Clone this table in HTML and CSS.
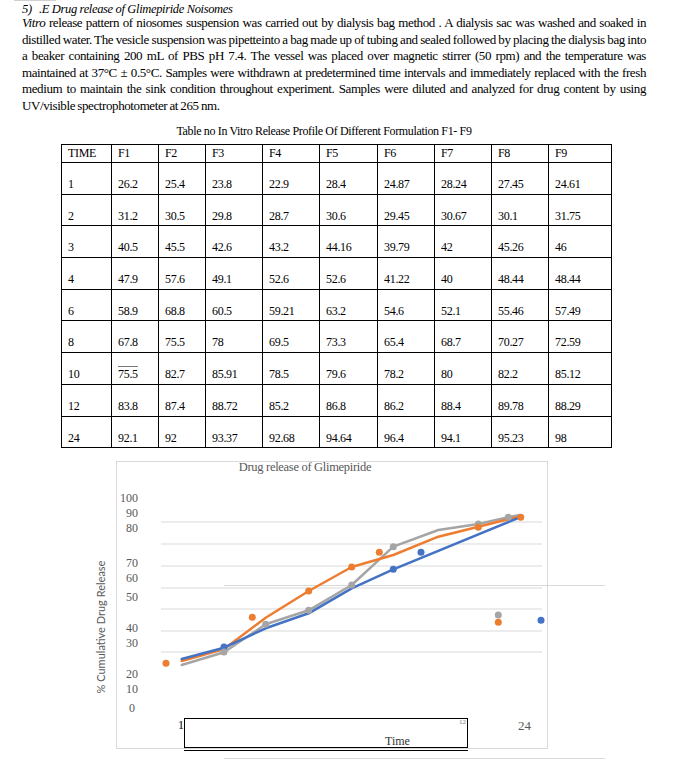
FILE: index.html
```html
<!DOCTYPE html>
<html>
<head>
<meta charset="utf-8">
<link rel="stylesheet" href="styles.css">
</head>
<body>
<div class="topmark"></div>
<div class="doc">
  <p class="heading"><span class="num">5)</span>.E Drug release of Glimepiride Noisomes</p>
  <p class="body"><i>Vitro</i> release pattern of niosomes suspension was carried out by dialysis bag method . A dialysis sac was washed and soaked in distilled water. The vesicle suspension was pipetteinto a bag made up of tubing and sealed followed by placing the dialysis bag into a beaker containing 200 mL of PBS pH 7.4. The vessel was placed over magnetic stirrer (50 rpm) and the temperature was maintained at 37°C ± 0.5°C. Samples were withdrawn at predetermined time intervals and immediately replaced with the fresh medium to maintain the sink condition throughout experiment. Samples were diluted and analyzed for drug content by using UV/visible spectrophotometer at 265 nm.</p>
  <p class="caption">Table no In Vitro Release Profile Of Different Formulation F1- F9</p>
  <table class="data">
    <colgroup>
      <col class="c0"><col class="c1"><col class="c2"><col class="c3"><col class="c4"><col class="c5"><col class="c6"><col class="c7"><col class="c8"><col class="c9">
    </colgroup>
    <tr class="head"><td>TIME</td><td>F1</td><td>F2</td><td>F3</td><td>F4</td><td>F5</td><td>F6</td><td>F7</td><td>F8</td><td>F9</td></tr>
    <tr><td>1</td><td>26.2</td><td>25.4</td><td>23.8</td><td>22.9</td><td>28.4</td><td>24.87</td><td>28.24</td><td>27.45</td><td>24.61</td></tr>
    <tr><td>2</td><td>31.2</td><td>30.5</td><td>29.8</td><td>28.7</td><td>30.6</td><td>29.45</td><td>30.67</td><td>30.1</td><td>31.75</td></tr>
    <tr><td>3</td><td>40.5</td><td>45.5</td><td>42.6</td><td>43.2</td><td>44.16</td><td>39.79</td><td>42</td><td>45.26</td><td>46</td></tr>
    <tr><td>4</td><td>47.9</td><td>57.6</td><td>49.1</td><td>52.6</td><td>52.6</td><td>41.22</td><td>40</td><td>48.44</td><td>48.44</td></tr>
    <tr><td>6</td><td>58.9</td><td>68.8</td><td>60.5</td><td>59.21</td><td>63.2</td><td>54.6</td><td>52.1</td><td>55.46</td><td>57.49</td></tr>
    <tr><td>8</td><td>67.8</td><td>75.5</td><td>78</td><td>69.5</td><td>73.3</td><td>65.4</td><td>68.7</td><td>70.27</td><td>72.59</td></tr>
    <tr><td>10</td><td><span class="mark">75.5</span></td><td>82.7</td><td>85.91</td><td>78.5</td><td>79.6</td><td>78.2</td><td>80</td><td>82.2</td><td>85.12</td></tr>
    <tr><td>12</td><td>83.8</td><td>87.4</td><td>88.72</td><td>85.2</td><td>86.8</td><td>86.2</td><td>88.4</td><td>89.78</td><td>88.29</td></tr>
    <tr><td>24</td><td>92.1</td><td>92</td><td>93.37</td><td>92.68</td><td>94.64</td><td>96.4</td><td>94.1</td><td>95.23</td><td>98</td></tr>
  </table>
</div>
<svg class="chart" width="675" height="306" viewBox="0 456 675 306" xmlns="http://www.w3.org/2000/svg">
  <g class="grid">
    <rect x="116.5" y="461.5" width="431" height="287" fill="#fff" stroke="#d9d9d9"/>
    <line x1="161" y1="522" x2="542" y2="522"/>
    <line x1="161" y1="544" x2="542" y2="544"/>
    <line x1="161" y1="566" x2="542" y2="566"/>
    <line x1="161" y1="588" x2="542" y2="588"/>
    <line x1="224" y1="585.5" x2="605" y2="585.5"/>
    <line x1="161" y1="609" x2="542" y2="609"/>
    <line x1="161" y1="631" x2="542" y2="631"/>
    <line x1="161" y1="652" x2="542" y2="652"/>
    <line x1="224" y1="758.5" x2="605" y2="758.5"/>
  </g>
  <text class="title" x="305" y="471" text-anchor="middle">Drug release of Glimepiride</text>
  <g class="ylab" text-anchor="end">
    <text x="138" y="502">100</text>
    <text x="138" y="517">90</text>
    <text x="138" y="532">80</text>
    <text x="138" y="567">70</text>
    <text x="138" y="582">60</text>
    <text x="138" y="601">50</text>
    <text x="138" y="632">40</text>
    <text x="138" y="647">30</text>
    <text x="138" y="678">20</text>
    <text x="138" y="693">10</text>
    <text x="135" y="712">0</text>
  </g>
  <text class="ytitle" transform="translate(105,627) rotate(-90)" text-anchor="middle">% Cumulative Drug Release</text>
  <polyline class="ln gray" points="181.7,665 224,652.3 265.7,624.3 308.7,610.3 351.7,585 393.3,546.7 438.3,530 478.3,524 508.3,517.3 520,515"/>
  <polyline class="ln orange" points="181.7,661 224,649 265.7,617.7 308.7,591 351.7,567 393.3,555 438.3,536.7 478.3,526.7 508.3,519.3 520.7,516.7"/>
  <polyline class="ln blue" points="181.7,659 224,647.7 265.7,628.3 308.7,613.3 351.7,588.3 393.3,569.3 520,517.3"/>
  <g class="dot-b">
    <circle cx="224" cy="647" r="3.5"/>
    <circle cx="393.3" cy="569.3" r="3.5"/>
    <circle cx="421" cy="552.3" r="3.5"/>
    <circle cx="541" cy="620.3" r="3.5"/>
  </g>
  <g class="dot-g">
    <circle cx="224" cy="652" r="3.5"/>
    <circle cx="265.7" cy="624.3" r="3.5"/>
    <circle cx="308.7" cy="610.3" r="3.5"/>
    <circle cx="351.7" cy="585" r="3.5"/>
    <circle cx="393.3" cy="546.7" r="3.5"/>
    <circle cx="478.3" cy="524" r="3.5"/>
    <circle cx="508.3" cy="517.3" r="3.5"/>
    <circle cx="498.3" cy="615" r="3.5"/>
  </g>
  <g class="dot-o">
    <circle cx="166" cy="663.3" r="3.5"/>
    <circle cx="252.3" cy="617.3" r="3.5"/>
    <circle cx="308.7" cy="591" r="3.5"/>
    <circle cx="351.7" cy="567" r="3.5"/>
    <circle cx="379.3" cy="552.3" r="3.5"/>
    <circle cx="478.3" cy="527.3" r="3.5"/>
    <circle cx="520.7" cy="517.3" r="3.5"/>
    <circle cx="498.3" cy="622.3" r="3.5"/>
  </g>
  <rect x="184.5" y="718.5" width="283" height="29" fill="#fff" stroke="#000"/>
  <line x1="184" y1="750.5" x2="468" y2="750.5" stroke="#000"/>
  <text class="one" x="178" y="729">1</text>
  <text class="twelve" x="459" y="724">12</text>
  <text class="time" x="385" y="745">Time</text>
  <text class="tf" x="518" y="730">24</text>
</svg>
</body>
</html>
```
FILE: styles.css
```css
html, body {
  margin: 0;
  padding: 0;
  background: #fff;
}
body {
  width: 675px;
  height: 762px;
  overflow: hidden;
  font-family: "Liberation Serif", serif;
  color: #000;
  position: relative;
}
.topmark {
  height: 1px;
  width: 42px;
  margin-left: 14px;
  background: #d0d0d0;
}
.doc {
  padding: 0 29px 0 22px;
}
.heading {
  margin: 0;
  padding-top: 3px;
  font-family: "Liberation Serif", serif;
  font-style: italic;
  font-size: 12.5px;
  line-height: 11px;
  letter-spacing: -0.35px;
}
.heading .num {
  display: inline-block;
  width: 17px;
}
.body {
  margin: 0;
  font-family: "Liberation Serif", serif;
  font-size: 13px;
  line-height: 16.5px;
  text-align: justify;
  letter-spacing: -0.4px;
  word-spacing: -0.6px;
}
.caption {
  margin: 10px 0 6px 0;
  font-family: "Liberation Serif", serif;
  font-size: 12px;
  line-height: 14px;
  text-align: center;
  letter-spacing: -0.35px;
  padding-right: 20px;
}
.data {
  border-collapse: collapse;
  margin: 0 0 0 39px;
  table-layout: fixed;
  width: 551px;
  font-family: "Liberation Serif", serif;
  font-size: 12px;
  letter-spacing: -0.3px;
}
.data td {
  border: 1px solid #000;
  padding: 0 0 2.7px 6px;
  height: 28px;
  vertical-align: bottom;
  line-height: 14px;
}
.data tr.head td {
  height: 15px;
  padding: 1px 0 1px 6px;
  vertical-align: top;
}
.c0 { width: 50px; }
.c1 { width: 47px; }
.c2 { width: 47px; }
.c3 { width: 57px; }
.c4 { width: 57px; }
.c5 { width: 58px; }
.c6 { width: 57px; }
.c7 { width: 57px; }
.c8 { width: 57px; }
.c9 { width: 63px; }
.mark {
  text-decoration: overline;
  text-decoration-color: #777;
}
.chart {
  display: block;
  position: absolute;
  left: 0;
  top: 456px;
}
.grid line {
  stroke: #d9d9d9;
  stroke-width: 1;
}
.title {
  font-family: "Liberation Serif", serif;
  font-size: 12.5px;
  fill: #595959;
  letter-spacing: -0.3px;
}
.ylab text {
  font-family: "Liberation Serif", serif;
  font-size: 12px;
  fill: #595959;
}
.ytitle {
  font-family: "Lato", "Liberation Sans", sans-serif;
  font-size: 11px;
  fill: #595959;
}
.ln {
  fill: none;
  stroke-width: 2.5;
  stroke-linejoin: round;
  stroke-linecap: round;
}
.blue { stroke: #4472c4; }
.orange { stroke: #ed7d31; }
.gray { stroke: #a5a5a5; }
.dot-b circle { fill: #4472c4; }
.dot-o circle { fill: #ed7d31; }
.dot-g circle { fill: #a5a5a5; }
.one {
  font-family: "Liberation Serif", serif;
  font-size: 12px;
  fill: #000;
}
.twelve {
  font-family: "Liberation Serif", serif;
  font-size: 7px;
  fill: #777;
}
.time {
  font-family: "Liberation Serif", serif;
  font-size: 12px;
  fill: #333;
}
.tf {
  font-family: "Liberation Serif", serif;
  font-size: 13px;
  fill: #595959;
}
```
